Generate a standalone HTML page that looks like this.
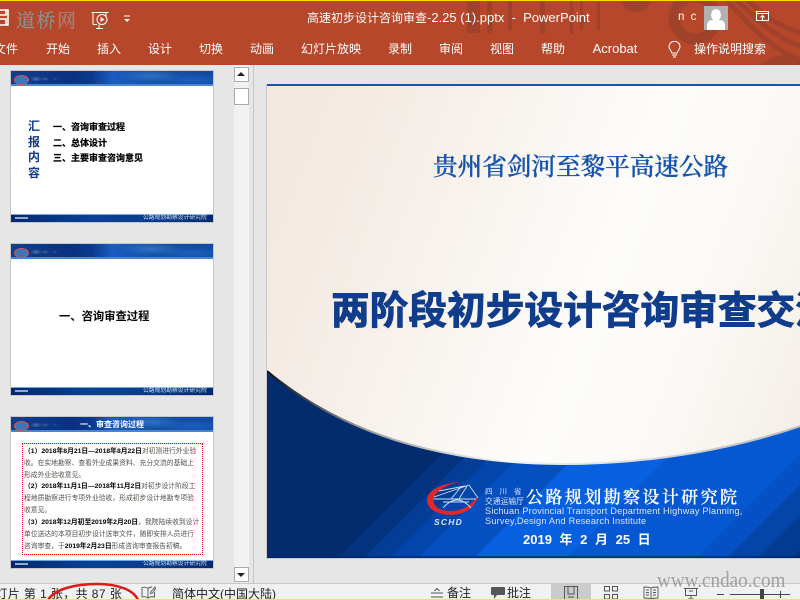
<!DOCTYPE html>
<html lang="zh"><head><meta charset="utf-8"><title>PowerPoint</title>
<style>
*{margin:0;padding:0;box-sizing:border-box}
html,body{width:800px;height:600px;overflow:hidden;background:#e6e6e6}
body{position:relative;font-family:"Liberation Sans","Noto Sans CJK SC",sans-serif}
.a{position:absolute;white-space:nowrap}
.tab{position:absolute;top:41px;color:#fff;font-size:12px;line-height:16px;white-space:nowrap;transform:translateX(-50%)}
.thumb{position:absolute;left:10px;width:204px;height:153px;background:#fff;border:1px solid #c6c6c6;overflow:hidden}
.hd{position:absolute;left:0;top:0;width:202px;height:15px;background:radial-gradient(ellipse 30px 6px at 140px 5px,#2f72c8,transparent),radial-gradient(ellipse 40px 6px at 180px 9px,#1d5fbe,transparent),linear-gradient(90deg,#0e3f8e,#0a3180 30%,#0c3a8c 40%,#1a5cc0 50%,#14509f 75%,#0f4aa5);border-bottom:2px solid #4a86d0}
.sm{position:absolute;left:20px;top:5px;width:28px;height:5px;opacity:.6;background:radial-gradient(ellipse 6px 3px at 5px 3px,#7f93b4,transparent),radial-gradient(ellipse 5px 2px at 14px 3px,#6078a0,transparent),radial-gradient(ellipse 3px 2px at 24px 3px,#456398,transparent)}
.ft{position:absolute;left:0;top:143px;width:202px;height:8px;background:linear-gradient(90deg,#04286f,#0a4096 40%,#0a3c8c 70%,#04286f);border-top:1px solid #6ea8dd}
.lg{position:absolute;left:3px;top:4px;width:15px;height:10px;border-radius:50%;background:#3f74b5;border:1px solid #d9534a}
.ftt{position:absolute;left:132px;top:0;font-size:5.800px;line-height:7px;color:#cfe0f2;white-space:nowrap}
.ftl{position:absolute;left:4px;top:2px;width:13px;height:2px;background:#b9c8e0;opacity:.8}
.t3{position:absolute;left:13px;font-size:6.800px;line-height:12px;color:#54504a;white-space:nowrap}
.t3 b{color:#000}
</style></head><body>

<!-- Title bar / ribbon -->
<div class="a" style="left:0;top:0;width:800px;height:65px;background:#b7472a"></div>
<svg class="a" style="left:460px;top:0" width="340" height="65" viewBox="0 0 340 65">
<g fill="#a0412a"><rect x="7" y="0" width="13" height="33"/><rect x="27" y="0" width="5" height="33"/><rect x="48" y="0" width="4" height="30"/><rect x="80" y="0" width="5" height="34"/><rect x="110" y="0" width="3" height="34"/><rect x="120" y="0" width="3" height="30"/><rect x="137" y="0" width="3" height="30"/><circle cx="176" cy="-3" r="15"/></g>
<circle cx="235" cy="18" r="21" fill="none" stroke="#a0412a" stroke-width="11"/>
<g fill="none" stroke="#a0412a" stroke-width="5"><path d="M264 -3C290 25 310 50 345 62M274 -3C296 20 316 38 345 48M285 -3C302 15 320 28 345 34"/></g>
<path d="M300 65C320 50 332 55 340 62V65Z" fill="#a0412a"/>
</svg>
<div class="a" style="left:0;top:0;width:800px;height:1px;background:#f5e100"></div>

<svg class="a" style="left:0;top:9px" width="10" height="18" viewBox="0 0 10 18"><path d="M-4 1H8V16H-4M-1 1V6H6V1M-1 16V10H6V16" fill="none" stroke="#fff" stroke-width="1.600"/></svg>
<div class="a" style="left:16px;top:8px;font:400 19px/24px 'Noto Serif CJK SC',serif;letter-spacing:1.500px;color:#8b8f90;-webkit-text-stroke:.3px #8b8f90">道桥<span style="color:#a8807a;-webkit-text-stroke:.3px #a8807a">网</span></div>
<svg class="a" style="left:90px;top:10px" width="20" height="20" viewBox="0 0 20 20"><path d="M1.500 2.500H18.500M3 2.500V14.500M7 14.500H3M16 6V2.500M9 14.500V18.500M6 18.500H13" fill="none" stroke="#fff"/><circle cx="12" cy="9.500" r="5" fill="none" stroke="#fff"/><path d="M10.500 7V12L14.500 9.500Z" fill="#fff"/></svg>
<svg class="a" style="left:123px;top:15px" width="9" height="8" viewBox="0 0 9 8"><path d="M1 1H7" stroke="#fff"/><path d="M1 4H7L4 7Z" fill="#fff"/></svg>

<div class="a" style="left:307px;top:10px;color:#fff;font-size:12px;line-height:16px">高速初步设计咨询审查<span style="font-size:13px">-2.25 (1).pptx &nbsp;-&nbsp; PowerPoint</span></div>
<div class="a" style="left:678px;top:9px;color:#fff;font-size:11.500px;line-height:16px;letter-spacing:1.500px">n c</div>
<div class="a" style="left:704px;top:6px;width:24px;height:24px;background:#b1b1b1;overflow:hidden">
<div class="a" style="left:7px;top:3px;width:10px;height:12px;border-radius:50%;background:#fff"></div>
<div class="a" style="left:3px;top:14px;width:18px;height:12px;border-radius:5px 5px 0 0;background:#fff"></div></div>
<svg class="a" style="left:755px;top:10px" width="15" height="12" viewBox="0 0 15 12"><path d="M1.500 1.500H13.500V10.500H1.500ZM1.500 3.500H13.500M7.500 10V5.500M5.500 7.500L7.500 5.500L9.500 7.500" fill="none" stroke="#fff"/></svg>

<div class="tab" style="left:6px">文件</div>
<div class="tab" style="left:58px">开始</div>
<div class="tab" style="left:109px">插入</div>
<div class="tab" style="left:160px">设计</div>
<div class="tab" style="left:211px">切换</div>
<div class="tab" style="left:262px">动画</div>
<div class="tab" style="left:331px">幻灯片放映</div>
<div class="tab" style="left:400px">录制</div>
<div class="tab" style="left:451px">审阅</div>
<div class="tab" style="left:502px">视图</div>
<div class="tab" style="left:553px">帮助</div>
<div class="tab" style="left:615px;font-size:13px">Acrobat</div>
<svg class="a" style="left:667px;top:41px" width="15" height="18" viewBox="0 0 15 18"><path d="M4.800 12C4.500 9.500 2 8.500 2 5.800A5.300 5.300 0 0 1 13 5.800C13 8.500 10.500 9.500 10.200 12ZM5 14H10M6 16H9" fill="none" stroke="#fff" stroke-width="1"/></svg>
<div class="a" style="left:694px;top:41px;color:#fff;font-size:12px;line-height:16px">操作说明搜索</div>

<!-- Thumb 1 -->
<div class="thumb" style="top:70px">
<div class="hd"></div><div class="sm"></div><div class="lg"></div>
<div class="a" style="left:17px;top:48px;width:14px;font-size:12px;line-height:15.500px;color:#103a8c;white-space:normal;font-weight:700">汇报内容</div>
<div class="a" style="left:42px;top:49px;font-size:9px;line-height:15.500px;color:#000;font-weight:700;-webkit-text-stroke:.2px #000">一、咨询审查过程<br>二、总体设计<br>三、主要审查咨询意见</div>
<div class="ft"><div class="ftl"></div><div class="ftt">公路规划勘察设计研究院</div></div>
</div>
<!-- Thumb 2 -->
<div class="thumb" style="top:243px">
<div class="hd"></div><div class="sm"></div><div class="lg"></div>
<div class="a" style="left:48px;top:66px;font-size:11.300px;line-height:15px;color:#000;font-weight:700">一、咨询审查过程</div>
<div class="ft"><div class="ftl"></div><div class="ftt">公路规划勘察设计研究院</div></div>
</div>
<!-- Thumb 3 -->
<div class="thumb" style="top:416px">
<div class="hd"></div><div class="sm"></div><div class="lg"></div>
<div class="a" style="left:69px;top:2px;font-size:8px;line-height:12px;color:#fff;font-weight:700">一、审查咨询过程</div>
<div class="a" style="left:11px;top:26px;width:181px;height:112px;border:1px dotted #e00000"></div>
<div class="t3" style="top:29px"><b>（1）2018年8月21日—2018年8月22日</b>对初测进行外业验</div>
<div class="t3" style="top:41px">收。在实地勘察、查看外业成果资料、充分交流的基础上</div>
<div class="t3" style="top:53px">形成外业验收意见。</div>
<div class="t3" style="top:64px"><b>（2）2018年11月1日—2018年11月2日</b>对初步设计阶段工</div>
<div class="t3" style="top:76px">程地质勘察进行专项外业验收，形成初步设计地勘专项验</div>
<div class="t3" style="top:88px">收意见。</div>
<div class="t3" style="top:100px"><b>（3）2018年12月初至2019年2月20日</b>，我院陆续收到设计</div>
<div class="t3" style="top:112px">单位送达的本项目初步设计送审文件，随即安排人员进行</div>
<div class="t3" style="top:124px">咨询审查，于<b>2019年2月23日</b>形成咨询审查报告初稿。</div>
<div class="ft"><div class="ftl"></div><div class="ftt">公路规划勘察设计研究院</div></div>
</div>

<!-- Scrollbar -->
<div class="a" style="left:234px;top:65px;width:15px;height:518px;background:#f1f1f1"></div>
<div class="a" style="left:234px;top:67px;width:15px;height:15px;background:#fff;border:1px solid #ababab"></div>
<div class="a" style="left:237px;top:72px;width:0;height:0;border:4px solid transparent;border-top:0;border-bottom:4px solid #222"></div>
<div class="a" style="left:234px;top:88px;width:15px;height:17px;background:#fff;border:1px solid #ababab"></div>
<div class="a" style="left:234px;top:567px;width:15px;height:15px;background:#fff;border:1px solid #ababab"></div>
<div class="a" style="left:237px;top:573px;width:0;height:0;border:4px solid transparent;border-bottom:0;border-top:4px solid #222"></div>
<div class="a" style="left:253px;top:65px;width:1px;height:518px;background:#c4c4c4"></div>

<!-- Main slide -->
<div class="a" style="left:266px;top:84px;width:534px;height:475px;border-left:1px solid #c8c8c8;border-bottom:1px solid #c8c8c8;overflow:hidden;background:#fff">
<svg class="a" style="left:0;top:0" width="534" height="474" viewBox="0 0 534 474">
<defs>
<linearGradient id="bg" gradientUnits="userSpaceOnUse" x1="0" y1="100" x2="534" y2="300"><stop offset="0" stop-color="#f2e8e0"/><stop offset=".15" stop-color="#f4ece5"/><stop offset=".6" stop-color="#fdfcfa"/><stop offset=".8" stop-color="#fbf9f6"/><stop offset="1" stop-color="#f5efe9"/></linearGradient>
<linearGradient id="edge" x1="0" y1="0" x2="1" y2="0"><stop offset="0" stop-color="#111"/><stop offset=".18" stop-color="#999"/><stop offset=".45" stop-color="#f5f5f5"/><stop offset="1" stop-color="#bbb"/></linearGradient>
<clipPath id="cv"><path d="M0 287Q110 379 295 380Q420 380 534 342V474H0Z"/></clipPath>
</defs>
<rect width="534" height="474" fill="url(#bg)"/>
<rect width="534" height="2" fill="#1a55a8"/>
<g clip-path="url(#cv)">
<rect y="280" width="534" height="194" fill="#022c6e"/>
<path d="M71 474L300 245H800V474Z" fill="#03337f"/>
<path d="M97 474L326 245H800V474Z" fill="#033d95"/>
<path d="M122 474L351 245H800V474Z" fill="#0346ab"/>
<path d="M151 474L380 245H800V474Z" fill="#054fc0"/>
<path d="M207 474L436 245H800V474Z" fill="#0660df"/>
<path d="M300 474L529 245H900V474Z" fill="#0558d2"/>
<path d="M430 474L659 245H900V474Z" fill="#0550c4"/>
<path d="M460 474L689 245H900V474Z" fill="#0445a8"/>
<path d="M490 474L719 245H900V474Z" fill="#033a92"/>
<path d="M525 474L754 245H900V474Z" fill="#03307a"/>
<rect y="472" width="534" height="2" fill="#032a68" opacity=".7"/>
</g>
<path d="M0 287Q110 379 295 380Q420 380 534 342" fill="none" stroke="url(#edge)" stroke-width="2"/>
<path d="M194 398C172 399 160 408 160 416C160 426 172 431 184 431C198 431 210 422 211 411C206 420 196 427 184 427C172 427 165 422 167 414C169 407 180 400 194 398Z" fill="#e0282c"/>
<path d="M167 415H209M167 413L202 401L211 414M172 407L198 402M194 403L184 415M200 402L192 415M176 424Q190 408 204 424M176 418H202" fill="none" stroke="#d4dff0" stroke-width=".9"/>
</svg>
<div class="a" style="left:166px;top:66px;font:500 24.600px/32px 'Noto Serif CJK SC',serif;color:#1553ac;-webkit-text-stroke:.35px #1553ac">贵州省剑河至黎平高速公路</div>
<div class="a" style="left:64px;top:201px;font:700 38.700px/46px 'Noto Sans CJK SC',sans-serif;color:#103c8c;-webkit-text-stroke:.9px #103c8c">两阶段初步设计咨询审查交流</div>
<div class="a" style="left:166px;top:434px;width:31px;height:8px;font:italic 700 8.500px/8px 'Liberation Sans',sans-serif;letter-spacing:1.200px;color:#dfe8f5;text-align:center">SCHD</div>
<div class="a" style="left:218px;top:402px;font-size:7.500px;line-height:11px;color:#dfe8f5;letter-spacing:7px">四川省</div>
<div class="a" style="left:218px;top:412px;font-size:7.800px;line-height:11px;color:#dfe8f5">交通运输厅</div>
<div class="a" style="left:259px;top:401px;font:500 17px/22px 'Noto Serif CJK SC',serif;color:#fff;letter-spacing:2.400px;-webkit-text-stroke:.3px #fff">公路规划勘察设计研究院</div>
<div class="a" style="left:218px;top:422px;font-size:9.200px;line-height:11px;color:#dbe6f5;letter-spacing:.2px">Sichuan Provincial Transport Department Highway Planning,</div>
<div class="a" style="left:218px;top:432px;font-size:9.200px;line-height:11px;color:#dbe6f5;letter-spacing:.2px">Survey,Design And Research Institute</div>
<div class="a" style="left:256px;top:447px;font-size:13px;line-height:18px;color:#fff;font-weight:700;word-spacing:4px">2019 年 2 月 25 日</div>
</div>

<!-- Status bar -->
<div class="a" style="left:0;top:583px;width:800px;height:17px;background:#f1f1f1;border-top:1px solid #c6c6c6"></div>
<div class="a" style="left:-17px;top:586px;font-size:12px;line-height:16px;color:#222;letter-spacing:.4px">幻灯片 第 1 张，共 87 张</div>
<svg class="a" style="left:40px;top:580px" width="110" height="20" viewBox="0 0 110 20"><path d="M8 20C15 9 35 4 57 4C78 4 94 10 98 20" fill="none" stroke="#e01818" stroke-width="2.500"/></svg>
<svg class="a" style="left:141px;top:586px" width="15" height="13" viewBox="0 0 15 13"><path d="M7 2.500C5 1 3 1 1 1.500V11C3 10.500 5 10.500 7 12V2.500C8 1.500 9 1 11 1M7 12C9 10.500 11 10.500 13.500 11V6M14 1L10 5.500L9.500 7.500L11.500 7L14.500 2.500Z" fill="none" stroke="#555" stroke-width=".9"/></svg>
<div class="a" style="left:172px;top:586px;font-size:12px;line-height:16px;color:#222">简体中文(中国大陆)</div>
<svg class="a" style="left:430px;top:588px" width="14" height="11" viewBox="0 0 14 11"><path d="M1 5H13M1 9H13" stroke="#555" fill="none"/><path d="M4.500 3L7 .5L9.500 3" stroke="#555" fill="none"/></svg>
<div class="a" style="left:447px;top:585px;font-size:12px;line-height:16px;color:#222">备注</div>
<svg class="a" style="left:490px;top:586px" width="16" height="14" viewBox="0 0 16 14"><path d="M2 1H14Q15 1 15 2V8Q15 9 14 9H7L4 13V9H2Q1 9 1 8V2Q1 1 2 1Z" fill="#555"/></svg>
<div class="a" style="left:507px;top:585px;font-size:12px;line-height:16px;color:#222">批注</div>
<div class="a" style="left:551px;top:584px;width:40px;height:16px;background:#cbcbcb"></div>
<svg class="a" style="left:563px;top:586px" width="16" height="14" viewBox="0 0 16 14"><path d="M1.500 13V.5H14.500V13M5 .5V8H11V.5M5 11H11" fill="none" stroke="#555"/></svg>
<svg class="a" style="left:603px;top:586px" width="16" height="14" viewBox="0 0 16 14"><path d="M1.500 .5H6.500V5H1.500ZM9.500 .5H14.500V5H9.500ZM1.500 8.500H6.500V13H1.500ZM9.500 8.500H14.500V13H9.500Z" fill="none" stroke="#555"/></svg>
<svg class="a" style="left:643px;top:586px" width="16" height="14" viewBox="0 0 16 14"><path d="M1 1C4 1 6 1 8 2C10 1 12 1 15 1V12C12 12 10 12 8 13C6 12 4 12 1 12ZM8 2V13M3 4H6M3 6.500H6M3 9H6M10 4H13M10 6.500H13M10 9H13" fill="none" stroke="#555" stroke-width=".9"/></svg>
<svg class="a" style="left:683px;top:586px" width="16" height="14" viewBox="0 0 16 14"><path d="M1 2.500H15M2.500 2.500V9.500H13.500V2.500M8 9.500V13M5 13H11M6 5H10" fill="none" stroke="#555"/></svg>
<div class="a" style="left:717px;top:594px;width:7px;height:1px;background:#444"></div>
<div class="a" style="left:730px;top:594px;width:60px;height:1px;background:#444"></div>
<div class="a" style="left:760px;top:589px;width:4px;height:11px;background:#444"></div>
<div class="a" style="left:780px;top:591px;width:1px;height:7px;background:#444"></div>
<div class="a" style="left:657px;top:566px;font:400 22px/28px 'Liberation Serif',serif;color:#8a8a8a;opacity:.75;transform:scaleX(.87);transform-origin:0 0">www.cndao.com</div>
<div class="a" style="left:0;top:599px;width:800px;height:1px;background:#f5e35a"></div>
</body></html>
